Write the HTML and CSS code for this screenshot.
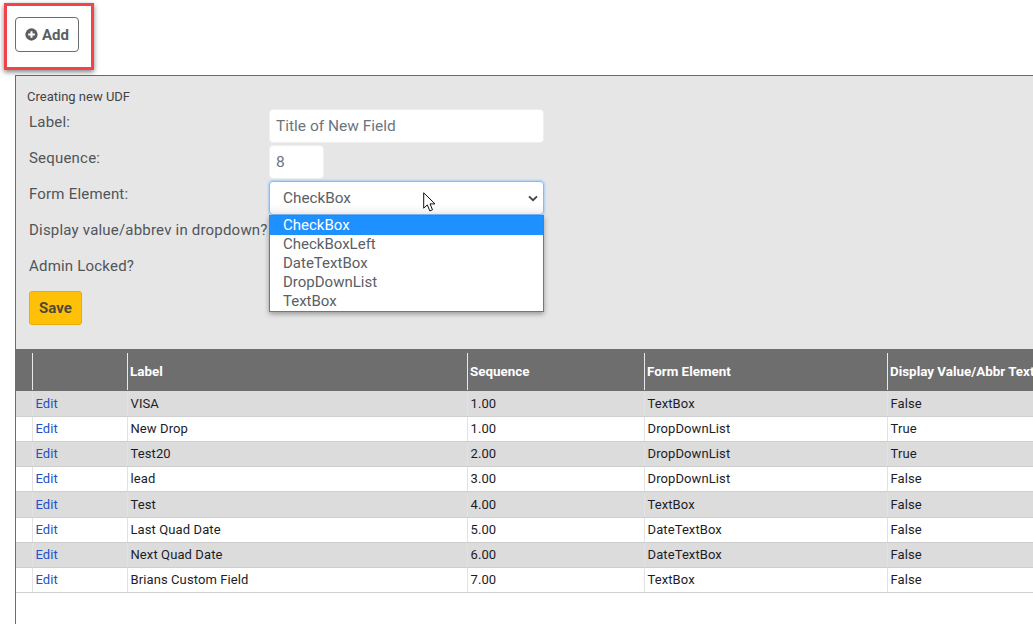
FILE: index.html
```html
<!DOCTYPE html>
<html lang="en">
<head>
<meta charset="utf-8">
<title>UDF</title>
<link rel="stylesheet" href="styles.css">
</head>
<body>
<div class="highlight"></div>
<header class="toolbar">
  <button class="add-btn" type="button">
    <svg class="add-icon" viewBox="0 0 14 14" width="13" height="13"><circle cx="7" cy="7" r="6.6" fill="#5a5f63"/><path d="M7 3.4v7.2M3.4 7h7.2" stroke="#fff" stroke-width="2.2"/></svg>
    <span>Add</span>
  </button>
</header>
<main class="panel">
  <section class="form-area">
    <div class="caption">Creating new UDF</div>
    <div class="form-row"><label class="form-label">Label:</label><input class="field field-wide" placeholder="Title of New Field"></div>
    <div class="form-row"><label class="form-label">Sequence:</label><input class="field field-small" value="8"></div>
    <div class="form-row">
      <label class="form-label">Form Element:</label>
      <div class="select-wrap">
        <div class="select">
          <span>CheckBox</span>
          <svg class="chevron" viewBox="0 0 12 8" width="10" height="7"><path d="M1.2 1.5 6 6l4.8-4.5" fill="none" stroke="#3f4448" stroke-width="2.2"/></svg>
        </div>
        <ul class="menu">
          <li class="menu-item active">CheckBox</li>
          <li class="menu-item">CheckBoxLeft</li>
          <li class="menu-item">DateTextBox</li>
          <li class="menu-item">DropDownList</li>
          <li class="menu-item">TextBox</li>
        </ul>
        <svg class="cursor" viewBox="0 0 14 20" width="14" height="20"><path d="M.7.8v15.4l3.6-3.3 2.5 6 2.7-1.1-2.5-5.9h5z" fill="#fff" stroke="#111" stroke-width="1"/></svg>
      </div>
    </div>
    <div class="form-row"><label class="form-label">Display value/abbrev in dropdown?</label></div>
    <div class="form-row"><label class="form-label">Admin Locked?</label></div>
    <button class="save-btn" type="button">Save</button>
  </section>
  <table class="grid">
    <colgroup><col class="c0"><col class="c1"><col class="c2"><col class="c3"><col class="c4"><col class="c5"></colgroup>
    <thead>
      <tr>
        <th><div class="th-in first"></div></th>
        <th><div class="th-in"></div></th>
        <th><div class="th-in">Label</div></th>
        <th><div class="th-in">Sequence</div></th>
        <th><div class="th-in">Form Element</div></th>
        <th><div class="th-in">Display Value/Abbr Text</div></th>
      </tr>
    </thead>
    <tbody>
      <tr class="odd"><td></td><td class="edit"><a href="#">Edit</a></td><td>VISA</td><td>1.00</td><td>TextBox</td><td>False</td></tr>
      <tr><td></td><td class="edit"><a href="#">Edit</a></td><td>New Drop</td><td>1.00</td><td>DropDownList</td><td>True</td></tr>
      <tr class="odd"><td></td><td class="edit"><a href="#">Edit</a></td><td>Test20</td><td>2.00</td><td>DropDownList</td><td>True</td></tr>
      <tr><td></td><td class="edit"><a href="#">Edit</a></td><td>lead</td><td>3.00</td><td>DropDownList</td><td>False</td></tr>
      <tr class="odd tall"><td></td><td class="edit"><a href="#">Edit</a></td><td>Test</td><td>4.00</td><td>TextBox</td><td>False</td></tr>
      <tr><td></td><td class="edit"><a href="#">Edit</a></td><td>Last Quad Date</td><td>5.00</td><td>DateTextBox</td><td>False</td></tr>
      <tr class="odd"><td></td><td class="edit"><a href="#">Edit</a></td><td>Next Quad Date</td><td>6.00</td><td>DateTextBox</td><td>False</td></tr>
      <tr><td></td><td class="edit"><a href="#">Edit</a></td><td>Brians Custom Field</td><td>7.00</td><td>TextBox</td><td>False</td></tr>
    </tbody>
  </table>
</main>
</body>
</html>
```
FILE: styles.css
```css
* { box-sizing: border-box; }
html, body { margin: 0; height: 100%; overflow: hidden; }
body { background: #fff; font-family: Roboto, "Liberation Sans", sans-serif; color: #495057; }

.highlight {
  position: absolute; left: 4px; top: 3px; width: 90px; height: 67px;
  border: 3px solid #f0434a; box-shadow: 0 2px 5px rgba(0,0,0,.5); pointer-events: none;
}

.toolbar { height: 75px; padding: 17px 0 0 15px; }
.add-btn {
  display: inline-flex; align-items: center; gap: 4px;
  width: 64px; height: 35px; padding: 0 0 0 9px;
  background: #fff; border: 1px solid #6c6c6c; border-radius: 4px;
  font: 700 15px Roboto, sans-serif; color: #5a5f63;
}
.add-icon { display: block; flex: none; }

.panel {
  margin-left: 15px; height: 549px; width: 1018px; overflow: hidden;
  border-left: 1px solid #6b6b6b; border-top: 1px solid #6b6b6b;
}
.form-area { height: 273px; background: #e6e6e6; padding: 14px 0 0 11px; position: relative; }
.caption { font-size: 13px; line-height: 14px; margin-bottom: 5px; color: #444; }

.form-row { display: flex; height: 36px; margin-left: 2px; }
.form-label { width: 240px; flex: none; font-size: 15px; line-height: 20px; padding-top: 3px; letter-spacing: .2px; color: #50555a; }
.field {
  height: 34px; background: #fff; border: 1px solid #efefef; border-radius: 4px;
  padding: 0 6px; margin: 0; font: 15.5px Roboto, sans-serif; color: #6c757d; outline: none;
}
.field::placeholder { color: #6c757d; opacity: 1; }
.field-wide { width: 275px; }
.field-small { width: 55px; }

.select-wrap { position: relative; width: 275px; height: 34px; }
.select {
  display: flex; align-items: center; justify-content: space-between;
  height: 34px; padding: 0 5px 0 13px;
  background: linear-gradient(#fff 70%, #f1f1f1);
  border: 1px solid #80bdff; border-radius: 4px; box-shadow: 0 0 2px 1px rgba(128,189,255,.6);
  font-size: 15.3px; color: #5a6066;
}
.menu {
  position: absolute; left: 0; top: 34px; width: 275px; margin: 0; padding: 0;
  list-style: none; background: #fff; border: 1px solid #767676;
  box-shadow: 0 2px 5px rgba(0,0,0,.35); z-index: 2;
}
.menu-item { height: 19px; line-height: 19px; padding-left: 13px; font-size: 15px; color: #5a6066; }
.menu-item.active { background: #1e90ff; color: #fff; }
.cursor { position: absolute; left: 154px; top: 11px; z-index: 3; }

.save-btn {
  display: block; width: 53px; height: 34px; margin: 2px 0 0 2px; padding: 0;
  background: #ffc107; border: 1px solid #e6ae06; border-radius: 3px;
  font: 700 15px Roboto, sans-serif; color: #4f4a36;
}

.grid { border-collapse: collapse; table-layout: fixed; width: 1160px; font-size: 13px; letter-spacing: .1px; color: #1c1c28; }
.c0 { width: 16px; } .c1 { width: 95px; } .c2 { width: 340px; }
.c3 { width: 177px; } .c4 { width: 243px; } .c5 { width: 289px; }
.grid th { padding: 0; height: 42px; background: #6e6e6e; color: #fff; text-align: left; vertical-align: top; font-weight: 700; font-size: 13.4px; letter-spacing: 0; }
.th-in { height: 37px; margin-top: 4px; padding-left: 2px; border-left: 1px solid #e8e8e8; line-height: 38px; white-space: nowrap; }
.th-in.first { border-left: 0; }
.grid td { height: 25px; padding: 0 0 0 3px; border-left: 1px solid #e2e2e2; border-bottom: 1px solid #cfcfcf; white-space: nowrap; }
.grid td:first-child { border-left: 0; }
.grid tr.tall td { height: 26px; }
.grid tr.odd td { background: #dcdcdc; }
.edit a { color: #2450c8; text-decoration: none; }
```
